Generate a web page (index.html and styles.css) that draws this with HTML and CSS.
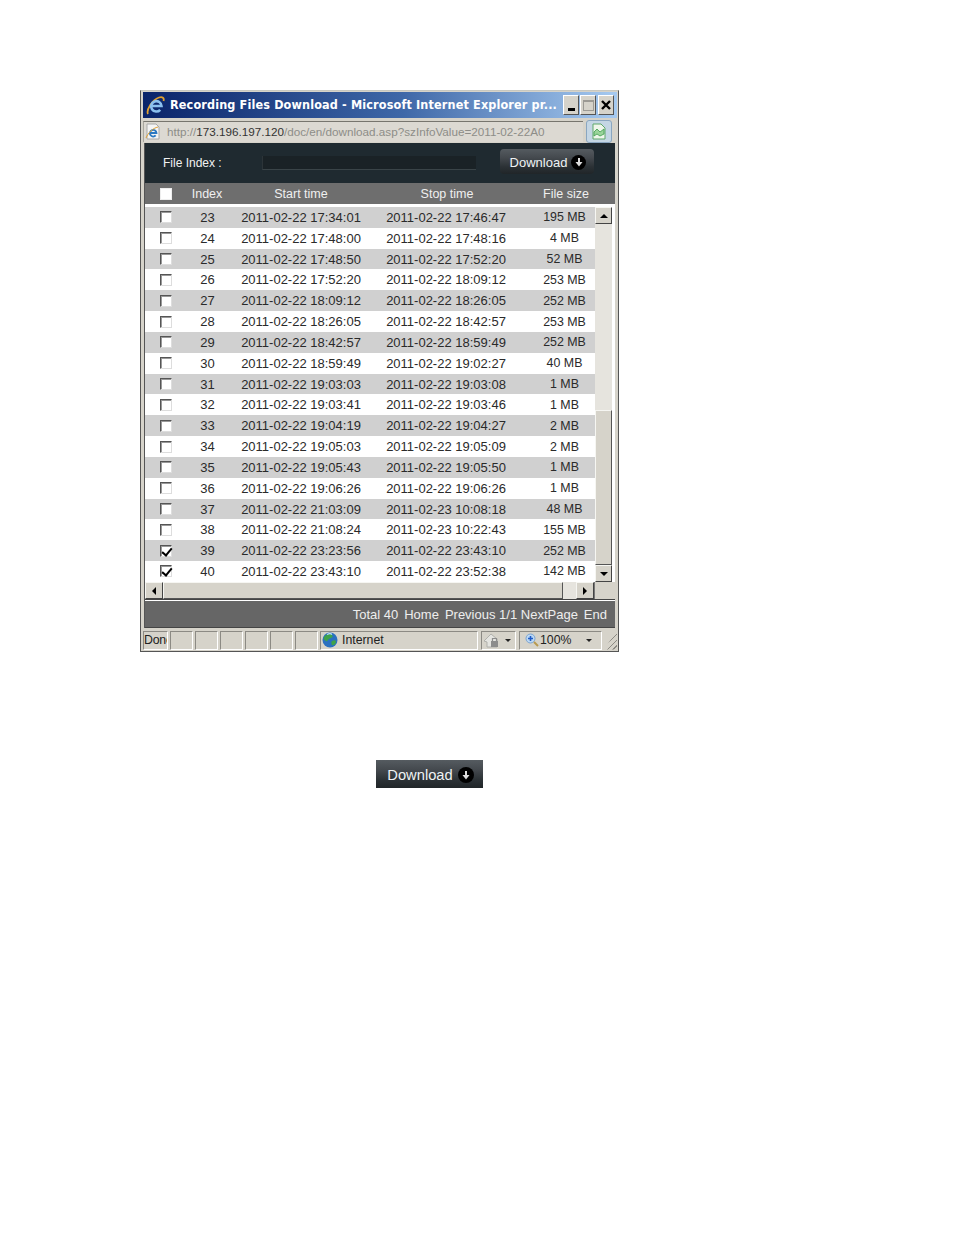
FILE: index.html
```html
<!DOCTYPE html>
<html lang="en">
<head>
    <meta charset="UTF-8">
    <title>Recording Files Download</title>
    <link rel="stylesheet" href="styles.css">
</head>
<body>
    <div class="ie-window">
        <div class="title-bar">
            <svg class="ie-logo" viewBox="0 0 20 20" width="20" height="20">
                <path d="M2 19C0 15 6 5 13 2.500c3.500-1.200 5.500.5 4.500 3.500" fill="none" stroke="#e0a030" stroke-width="1.800"/>
                <path d="M5.500 11h10a5.200 5.200 0 1 0-1.300 3.800" fill="none" stroke="#8cc0ee" stroke-width="2.600"/>
            </svg>
            <span class="title-text">Recording Files Download - Microsoft Internet Explorer pr...</span>
            <div class="win-buttons">
                <span class="win-btn"><i class="min-mark"></i></span>
                <span class="win-btn disabled"><i class="max-mark"></i></span>
                <span class="win-btn close-btn">
                    <svg viewBox="0 0 10 10" width="10" height="10"><path d="M1 1l8 8M9 1l-8 8" stroke="#000" stroke-width="2.400"/></svg>
                </span>
            </div>
        </div>
        <div class="address-bar">
            <div class="address-box">
                <svg class="page-icon" viewBox="0 0 16 17" width="16" height="17">
                    <path d="M2 1h9l3 3v12H2z" fill="#f4f4f4" stroke="#a8a8a8"/>
                    <path d="M5.500 10h6a3.300 3.300 0 1 0-.8 2.400" fill="none" stroke="#2b78c2" stroke-width="1.800"/>
                    <path d="M1 15C3 10 8 5 13 4" fill="none" stroke="#e0a030" stroke-width="1"/>
                </svg>
                <span class="url">http://<b>173.196.197.120</b>/doc/en/download.asp?szInfoValue=2011-02-22A0</span>
            </div>
            <span class="sheet-btn">
                <svg viewBox="0 0 14 17" width="14" height="17">
                    <path d="M1 1h8l4 4v11H1z" fill="#eef6ea" stroke="#5fa86a"/>
                    <path d="M2 9l3-3 3 3 4-3v5l-4 2-3-2-3 2z" fill="#9ad49a" stroke="#3c9c4c" stroke-width=".8"/>
                </svg>
            </span>
        </div>
        <div class="content">
            <div class="index-panel">
                <span class="index-label">File Index :</span>
                <div class="index-field"></div>
                <a class="download-btn small">Download <i class="arrow-dot"><svg viewBox="0 0 10 10" width="10" height="10"><path d="M5 1v5" stroke="#ddd" stroke-width="2"/><path d="M1.500 5h7L5 9.500z" fill="#ddd"/></svg></i></a>
            </div>
            <div class="list-head">
                <span class="col-check"><span class="check head-check"></span></span>
                <span class="col-index">Index</span>
                <span class="col-start">Start time</span>
                <span class="col-stop">Stop time</span>
                <span class="col-size">File size</span>
            </div>
            <div class="list-area">
                <div class="rows" id="rows"></div>
                <div class="v-scroll">
                    <span class="scroll-btn"><i class="tri up"></i></span>
                    <div class="v-track"><div class="v-hatch"></div><div class="v-thumb"></div></div>
                    <span class="scroll-btn"><i class="tri down"></i></span>
                </div>
            </div>
            <div class="h-scroll">
                <span class="scroll-btn h"><i class="tri left"></i></span>
                <div class="h-thumb"></div>
                <div class="h-hatch"></div>
                <span class="scroll-btn h"><i class="tri right"></i></span>
                <span class="scroll-corner"></span>
            </div>
            <div class="pager">
                <span>Total 40</span><span>Home</span><span>Previous 1/1 NextPage</span><span>End</span>
            </div>
        </div>
        <div class="status-bar">
            <span class="cell done">Done</span>
            <span class="cell blank"></span>
            <span class="cell blank"></span>
            <span class="cell blank"></span>
            <span class="cell blank"></span>
            <span class="cell blank"></span>
            <span class="cell blank"></span>
            <span class="cell zone">
                <svg viewBox="0 0 16 16" width="16" height="16">
                    <circle cx="8" cy="8" r="7.500" fill="#2a70c0"/>
                    <path d="M2 5c2-3 6-4 8-2s-1 3-3 4-1 3-3 2-3-2-2-4zM10 9c2-1 4-1 4 1s-3 4-4 3-1-3 0-4z" fill="#3fa34a"/>
                    <path d="M5 2.500c2-1 4-1 5 0" fill="none" stroke="#bfe0f8" stroke-width="1.200"/>
                </svg>
                Internet
            </span>
            <span class="cell lock">
                <svg viewBox="0 0 18 15" width="18" height="15">
                    <path d="M0 8l7-7 6 5v8H3V9z" fill="#e4e4e0" stroke="#b0b0ac"/>
                    <path d="M7 8h7v6H7z" fill="#8c8c8c"/>
                    <path d="M8.500 8V5.500h4V8" fill="none" stroke="#8c8c8c" stroke-width="1.200"/>
                </svg>
                <i class="tri down tiny"></i>
            </span>
            <span class="cell zoom">
                <svg viewBox="0 0 14 14" width="14" height="14">
                    <circle cx="5.500" cy="5.500" r="4.500" fill="#bcd8f4" stroke="#7ca4d0"/>
                    <path d="M3 5.500h5M5.500 3v5" stroke="#1f5cc8" stroke-width="1.600"/>
                    <path d="M9 9l4 4" stroke="#b89a50" stroke-width="2"/>
                </svg>
                100%
                <i class="tri down tiny"></i>
            </span>
            <span class="grip"></span>
        </div>
    </div>

    <div class="second-wrap">
        <a class="download-btn large">Download <i class="arrow-dot"><svg viewBox="0 0 10 10" width="10" height="10"><path d="M5 1v5" stroke="#ddd" stroke-width="2"/><path d="M1.500 5h7L5 9.500z" fill="#ddd"/></svg></i></a>
    </div>

    <script>
        const files = [
            [23, '2011-02-22 17:34:01', '2011-02-22 17:46:47', '195 MB'],
            [24, '2011-02-22 17:48:00', '2011-02-22 17:48:16', '4 MB'],
            [25, '2011-02-22 17:48:50', '2011-02-22 17:52:20', '52 MB'],
            [26, '2011-02-22 17:52:20', '2011-02-22 18:09:12', '253 MB'],
            [27, '2011-02-22 18:09:12', '2011-02-22 18:26:05', '252 MB'],
            [28, '2011-02-22 18:26:05', '2011-02-22 18:42:57', '253 MB'],
            [29, '2011-02-22 18:42:57', '2011-02-22 18:59:49', '252 MB'],
            [30, '2011-02-22 18:59:49', '2011-02-22 19:02:27', '40 MB'],
            [31, '2011-02-22 19:03:03', '2011-02-22 19:03:08', '1 MB'],
            [32, '2011-02-22 19:03:41', '2011-02-22 19:03:46', '1 MB'],
            [33, '2011-02-22 19:04:19', '2011-02-22 19:04:27', '2 MB'],
            [34, '2011-02-22 19:05:03', '2011-02-22 19:05:09', '2 MB'],
            [35, '2011-02-22 19:05:43', '2011-02-22 19:05:50', '1 MB'],
            [36, '2011-02-22 19:06:26', '2011-02-22 19:06:26', '1 MB'],
            [37, '2011-02-22 21:03:09', '2011-02-23 10:08:18', '48 MB'],
            [38, '2011-02-22 21:08:24', '2011-02-23 10:22:43', '155 MB'],
            [39, '2011-02-22 23:23:56', '2011-02-22 23:43:10', '252 MB'],
            [40, '2011-02-22 23:43:10', '2011-02-22 23:52:38', '142 MB']
        ];

        const rows = document.getElementById('rows');
        files.forEach((file, i) => {
            const row = document.createElement('div');
            row.className = i % 2 === 0 ? 'row shaded' : 'row';
            const ticked = file[0] >= 39 ? ' ticked' : '';
            row.innerHTML =
                '<span class="col-check"><span class="check' + ticked + '"></span></span>' +
                '<span class="col-index">' + file[0] + '</span>' +
                '<span class="col-start">' + file[1] + '</span>' +
                '<span class="col-stop">' + file[2] + '</span>' +
                '<span class="col-size">' + file[3] + '</span>';
            rows.appendChild(row);
        });
    </script>
</body>
</html>
```

FILE: styles.css
```css
* {
    margin: 0;
    padding: 0;
    box-sizing: border-box;
}

body {
    background-color: #ffffff;
    font-family: 'Liberation Sans', Arial, sans-serif;
    padding: 90px 0 0 140px;
    color: #222;
}

.ie-window {
    width: 479px;
    height: 562px;
    background-color: #d6d3ca;
    border: 1px solid #555;
    border-top-color: #c8c8c0;
    padding: 1px 1px 1px 2px;
    display: flex;
    flex-direction: column;
}

.title-bar {
    height: 26px;
    padding: 0 3px 0 3px;
    display: flex;
    align-items: center;
    background: linear-gradient(to right, #0a246a 0%, #3f68a8 55%, #a6caf0 100%);
}

.ie-logo {
    flex: none;
    margin-right: 4px;
}

.title-text {
    flex: 1;
    min-width: 0;
    color: #fff;
    font-family: 'DejaVu Sans Condensed', 'DejaVu Sans', sans-serif;
    font-size: 12.500px;
    font-weight: bold;
    letter-spacing: 0.150px;
    padding-bottom: 2px;
    white-space: nowrap;
}

.win-buttons {
    display: flex;
    gap: 1px;
}

.win-btn {
    width: 16px;
    height: 20px;
    background-color: #d6d3ca;
    border: 1px solid;
    border-color: #fff #555 #555 #fff;
    display: flex;
    align-items: center;
    justify-content: center;
}

.close-btn {
    margin-left: 1px;
}

.min-mark {
    width: 7px;
    height: 3px;
    background-color: #000;
    margin-top: 9px;
}

.max-mark {
    width: 11px;
    height: 11px;
    border: 1px solid #9c9a94;
    border-top-width: 2px;
}

.address-bar {
    height: 25px;
    display: flex;
    align-items: center;
    padding: 1px 5px 0 0;
    gap: 3px;
}

.address-box {
    flex: 1;
    height: 21px;
    display: flex;
    align-items: center;
    border-top: 1px solid #77756e;
    border-left: 1px solid #a8a69e;
    background-color: #dcd9d2;
    font-size: 11.700px;
    color: #8d8d88;
    white-space: nowrap;
    overflow: hidden;
}

.page-icon {
    flex: none;
    margin: 0 6px 0 1px;
}

.url b {
    font-weight: normal;
    color: #333;
}

.sheet-btn {
    width: 26px;
    height: 23px;
    border: 1px solid #8aa6c0;
    border-radius: 3px;
    background-color: #c4d6e4;
    display: flex;
    align-items: center;
    justify-content: center;
}

.content {
    flex: 1;
    margin-left: 1px;
    margin-right: 2px;
    background-color: #fff;
    border-left: 1px solid #555;
    display: flex;
    flex-direction: column;
    font-size: 12px;
}

.index-panel {
    height: 40px;
    background-color: #1f2a30;
    display: flex;
    align-items: center;
    color: #f2f2f2;
    padding-left: 18px;
}

.index-label {
    width: 99px;
}

.index-field {
    width: 214px;
    height: 14px;
    background-color: #1a2226;
    border-bottom: 1px solid #3a4448;
    border-left: 1px solid #2c3438;
    margin-right: 24px;
}

.download-btn {
    display: inline-flex;
    align-items: center;
    justify-content: center;
    color: #eef2f4;
    background: linear-gradient(to bottom, #555b60 0%, #44494e 35%, #2c3236 70%, #202528 100%);
}

.download-btn.small {
    width: 94px;
    height: 25px;
    margin-top: -3px;
    padding: 1px 0 0 2px;
    border-radius: 4px;
    font-size: 13px;
    gap: 4px;
}

.download-btn.large {
    width: 107px;
    height: 28px;
    padding: 1px 0 0 2px;
    font-size: 14.700px;
    gap: 5px;
}

.arrow-dot {
    width: 15px;
    height: 15px;
    border-radius: 50%;
    background-color: #000;
    display: flex;
    align-items: center;
    justify-content: center;
}

.large .arrow-dot {
    width: 16px;
    height: 16px;
}

.list-head,
.row {
    display: flex;
    align-items: center;
    text-align: center;
}

.list-head {
    height: 21px;
    background-color: #6e6e6e;
    color: #f0f0f0;
    font-size: 12.500px;
    margin-bottom: 3px;
}

.col-check {
    width: 42px;
    flex: none;
    display: flex;
    justify-content: center;
}

.col-index {
    width: 40px;
    flex: none;
}

.row .col-index {
    padding-left: 1px;
}

.col-start {
    width: 148px;
    flex: none;
}

.col-stop {
    width: 142px;
    flex: none;
}

.list-head .col-stop {
    padding-left: 2px;
}

.col-size {
    width: 78px;
    flex: none;
    padding-left: 17px;
}

.list-head .col-size {
    padding-left: 20px;
}

.row .col-size {
    font-size: 12.400px;
}

.check {
    width: 12px;
    height: 12px;
    background-color: #fff;
    border: 1px solid;
    border-color: #555 #ddd #ddd #555;
    box-shadow: inset 1px 1px 0 #999;
    position: relative;
}

.head-check {
    box-shadow: none;
    border-color: #eee;
}

.check.ticked::after {
    content: "";
    position: absolute;
    left: 3px;
    top: 0;
    width: 4px;
    height: 8px;
    border: solid #000;
    border-width: 0 2px 2px 0;
    transform: rotate(40deg);
}

.list-area {
    height: 375px;
    display: flex;
    padding-right: 3px;
}

.rows {
    flex: 1;
    min-width: 0;
    display: flex;
    flex-direction: column;
    color: #2a2a2a;
    font-size: 13px;
}

.row {
    flex: 1;
    background-color: #fff;
}

.row.shaded {
    background-color: #d0d0d0;
}

.v-scroll {
    width: 17px;
    flex: none;
    display: flex;
    flex-direction: column;
    background-color: #d6d3ca;
}

.scroll-btn {
    flex: none;
    height: 17px;
    width: 17px;
    background-color: #d6d3ca;
    border: 1px solid;
    border-color: #f6f6f2 #444 #444 #f6f6f2;
    display: flex;
    align-items: center;
    justify-content: center;
}

.v-track {
    flex: 1;
    display: flex;
    flex-direction: column;
}

.v-hatch {
    height: 186px;
    background-color: #e6e4de;
}

.v-thumb {
    flex: 1;
    background-color: #d6d3ca;
    border: 1px solid;
    border-color: #f6f6f2 #555 #555 #f6f6f2;
}

.tri {
    width: 0;
    height: 0;
    border-style: solid;
    border-color: transparent;
}

.tri.up {
    border-width: 0 4px 4px;
    border-bottom-color: #000;
}

.tri.down {
    border-width: 4px 4px 0;
    border-top-color: #000;
}

.tri.left {
    border-width: 4px 4px 4px 0;
    border-right-color: #000;
}

.tri.right {
    border-width: 4px 0 4px 4px;
    border-left-color: #000;
}

.tri.tiny {
    border-width: 3px 3px 0;
    border-top-color: #222;
}

.h-scroll {
    height: 18px;
    display: flex;
    background-color: #d6d3ca;
    border-bottom: 1px solid #444;
    padding-right: 3px;
}

.scroll-btn.h {
    height: 17px;
    width: 18px;
}

.h-thumb {
    width: 400px;
    border: 1px solid;
    border-color: #f6f6f2 #555 #555 #f6f6f2;
}

.h-hatch {
    flex: 1;
    background-color: #e6e4de;
}

.scroll-corner {
    width: 18px;
    flex: none;
    background-color: #d6d3ca;
    border-left: 1px solid #777;
}

.pager {
    flex: 1;
    margin-top: 1px;
    background-color: #666;
    color: #eee;
    font-size: 13px;
    display: flex;
    align-items: center;
    justify-content: flex-end;
    gap: 6px;
    padding-right: 8px;
    border-bottom: 1px solid #444;
}

.status-bar {
    height: 22px;
    display: flex;
    align-items: center;
    gap: 2px;
    font-size: 12.300px;
    color: #222;
    padding-top: 2px;
}

.cell {
    height: 19px;
    flex: none;
    border: 1px solid;
    border-color: #8c8a84 #fff #fff #8c8a84;
    display: flex;
    align-items: center;
    overflow: hidden;
    white-space: nowrap;
}

.cell.done {
    width: 25px;
    letter-spacing: -0.200px;
}

.cell.blank {
    width: 23px;
}

.cell.zone {
    width: 158px;
    gap: 4px;
    padding-left: 1px;
    margin-right: 1px;
}

.cell.lock {
    width: 35px;
    gap: 3px;
    padding-left: 2px;
    margin-right: 1px;
}

.cell.zoom {
    width: 83px;
    gap: 1px;
    padding-left: 5px;
}

.cell.zoom .tri {
    margin-left: 14px;
}

.grip {
    flex: 1;
    height: 19px;
    background: repeating-linear-gradient(135deg, transparent 0 3px, #8c8a84 3px 4px);
    clip-path: polygon(100% 0, 100% 100%, 0 100%);
}

.second-wrap {
    padding: 108px 0 0 236px;
}
```
